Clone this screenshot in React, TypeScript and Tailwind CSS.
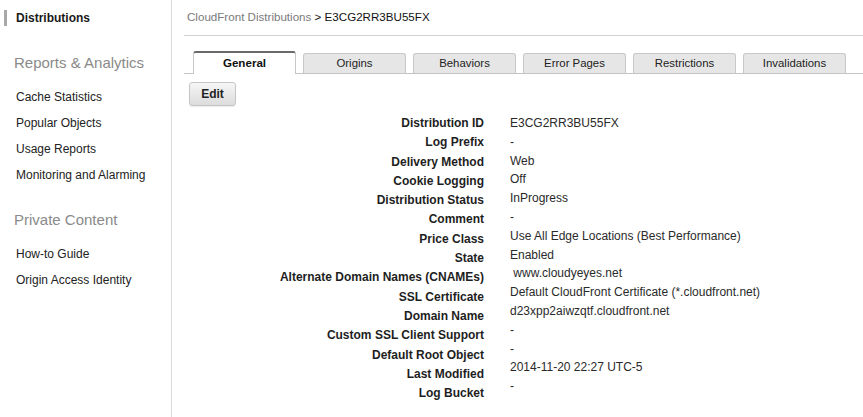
import React from "react";

const rows: [string, string][] = [
  ["Distribution ID", "E3CG2RR3BU55FX"],
  ["Log Prefix", "-"],
  ["Delivery Method", "Web"],
  ["Cookie Logging", "Off"],
  ["Distribution Status", "InProgress"],
  ["Comment", "-"],
  ["Price Class", "Use All Edge Locations (Best Performance)"],
  ["State", "Enabled"],
  ["Alternate Domain Names (CNAMEs)", "\u00a0www.cloudyeyes.net"],
  ["SSL Certificate", "Default CloudFront Certificate (*.cloudfront.net)"],
  ["Domain Name", "d23xpp2aiwzqtf.cloudfront.net"],
  ["Custom SSL Client Support", "-"],
  ["Default Root Object", "-"],
  ["Last Modified", "2014-11-20 22:27 UTC-5"],
  ["Log Bucket", "-"],
];

const tabs = ["General", "Origins", "Behaviors", "Error Pages", "Restrictions", "Invalidations"];

export default function App() {
  return (
    <div className="flex w-[863px] h-[417px] overflow-hidden bg-white font-['Liberation_Sans',Arial,sans-serif] text-[12px] text-[#222]">
      {/* Sidebar */}
      <div className="w-[172px] shrink-0 border-r border-[#dadada] pt-[10px]">
        <div className="flex items-center h-[16px]">
          <div className="ml-[4px] w-[3px] h-[16px] bg-[#a8a8a8]" />
          <div className="ml-[9px] font-bold text-[#1a1a1a] leading-[16px]">Distributions</div>
        </div>
        <div className="mt-[27px] pl-[14px] text-[15px] leading-[20px] text-[#8a8a8a]">Reports &amp; Analytics</div>
        <div className="mt-[11px] pl-[16px] leading-[26px] text-[#222]">
          <div>Cache Statistics</div>
          <div>Popular Objects</div>
          <div>Usage Reports</div>
          <div>Monitoring and Alarming</div>
        </div>
        <div className="mt-[22px] pl-[14px] text-[15px] leading-[20px] text-[#8a8a8a]">Private Content</div>
        <div className="mt-[11px] pl-[16px] leading-[26px] text-[#222]">
          <div>How-to Guide</div>
          <div>Origin Access Identity</div>
        </div>
      </div>

      {/* Main */}
      <div className="flex-1 ml-[12px] flex flex-col">
        <div className="h-[36px] border-b border-[#d0d0d0] pt-[9px] pl-[3px] text-[11.6px] leading-[16px]">
          <span className="text-[#7a7a7a]">CloudFront Distributions</span>
          <span className="text-[#111]"> &gt; E3CG2RR3BU55FX</span>
        </div>

        <div className="mt-[15px] flex items-end gap-[7px] pl-[9px] border-b border-[#c4c4c4] h-[23px]">
          {tabs.map((t, i) =>
            i === 0 ? (
              <div
                key={t}
                className="w-[103px] h-[23px] -mb-px bg-white border-t-2 border-t-[#6a6a6a] border-x border-x-[#c8c8c8] rounded-t-[3px] flex items-center justify-center font-bold text-[11.6px] text-[#111] pb-[1px]"
              >
                {t}
              </div>
            ) : (
              <div
                key={t}
                className="w-[103px] h-[20px] bg-[#e6e6e6] border border-b-0 border-[#c8c8c8] rounded-t-[3px] flex items-center justify-center text-[11.4px] text-[#222] pt-[1px]"
              >
                {t}
              </div>
            )
          )}
        </div>

        <div className="mt-[8px] ml-[5px] w-[47px] h-[24px] rounded-[3px] border border-[#c6c6c6] bg-gradient-to-b from-[#f6f6f6] to-[#dcdcdc] shadow-[0_1px_1px_rgba(0,0,0,0.08)] flex items-center justify-center font-bold text-[12px] text-[#222]">
          Edit
        </div>

        <div className="mt-[8px] flex">
          <div className="w-[300px] text-right font-bold text-[#1e1e1e] leading-[19.3px]">
            {rows.map(([l]) => (
              <div key={l}>{l}</div>
            ))}
          </div>
          <div className="ml-[26px] text-[#2a2a2a] leading-[18.8px]">
            {rows.map(([l, v]) => (
              <div key={l}>{v}</div>
            ))}
          </div>
        </div>
      </div>
    </div>
  );
}
